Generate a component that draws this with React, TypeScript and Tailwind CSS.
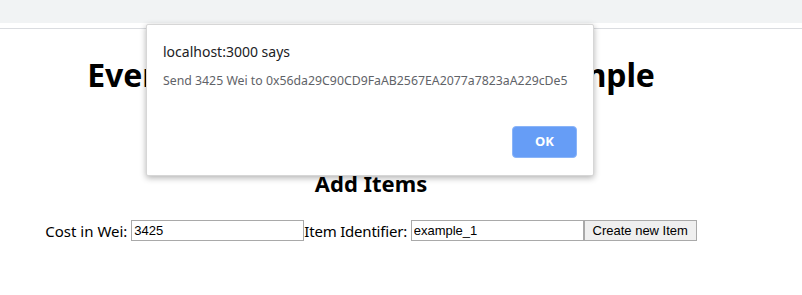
import React from 'react';

const App = () => {
  return (
    <div className="relative h-[295px] w-[802px] overflow-hidden bg-white">
      <div className="h-[23px] bg-[#f1f3f4]" />
      <div className="h-[6px] border-b border-[#dadce0] bg-white" />

      <main className="w-[742px] text-center text-black [font-family:'Noto_Sans',sans-serif]">
        <h1 className="mt-[27px] text-[32px] font-bold leading-[38px] tracking-[-0.1px]">
          Event Trigger Supply Chain Example
        </h1>
        <h2 className="mt-[74px] text-[22px] font-bold leading-[30px]">Add Items</h2>
        <div className="mt-[22px] flex items-center justify-center text-[15px] leading-[20px]">
          <span>Cost in Wei:&nbsp;</span>
          <input
            type="text"
            defaultValue="3425"
            className="h-[21px] w-[173px] border border-[#a9a9a9] px-[2px] text-[13px] text-black [font-family:'Liberation_Sans',sans-serif]"
          />
          <span className="tracking-[-0.2px]">Item Identifier:&nbsp;</span>
          <input
            type="text"
            defaultValue="example_1"
            className="h-[21px] w-[173px] border border-[#a9a9a9] px-[2px] text-[13px] text-black [font-family:'Liberation_Sans',sans-serif]"
          />
          <button
            type="button"
            className="h-[21px] w-[113px] border border-[#a9a9a9] bg-[#efefef] text-[13px] text-black [font-family:'Liberation_Sans',sans-serif]"
          >
            Create new Item
          </button>
        </div>
      </main>

      <div className="absolute left-[146px] top-[24px] flex h-[152px] w-[448px] flex-col rounded-[2px] border border-[#d6d6d6] bg-white px-[16px] pb-[17px] pt-[17px] shadow-[0_2px_6px_rgba(0,0,0,0.3)] [font-family:'Noto_Sans',sans-serif]">
        <p className="text-[14px] leading-[20px] text-[#202124]">localhost:3000 says</p>
        <p className="mt-[10px] text-[12.3px] leading-[18px] text-[#5f6368]">
          Send 3425 Wei to 0x56da29C90CD9FaAB2567EA2077a7823aA229cDe5
        </p>
        <div className="mt-auto flex justify-end">
          <button
            type="button"
            className="h-[32px] w-[65px] rounded-[4px] border border-[#8ab4f8] bg-[#669df6] text-[13px] font-bold text-white"
          >
            OK
          </button>
        </div>
      </div>
    </div>
  );
};

export default App;
